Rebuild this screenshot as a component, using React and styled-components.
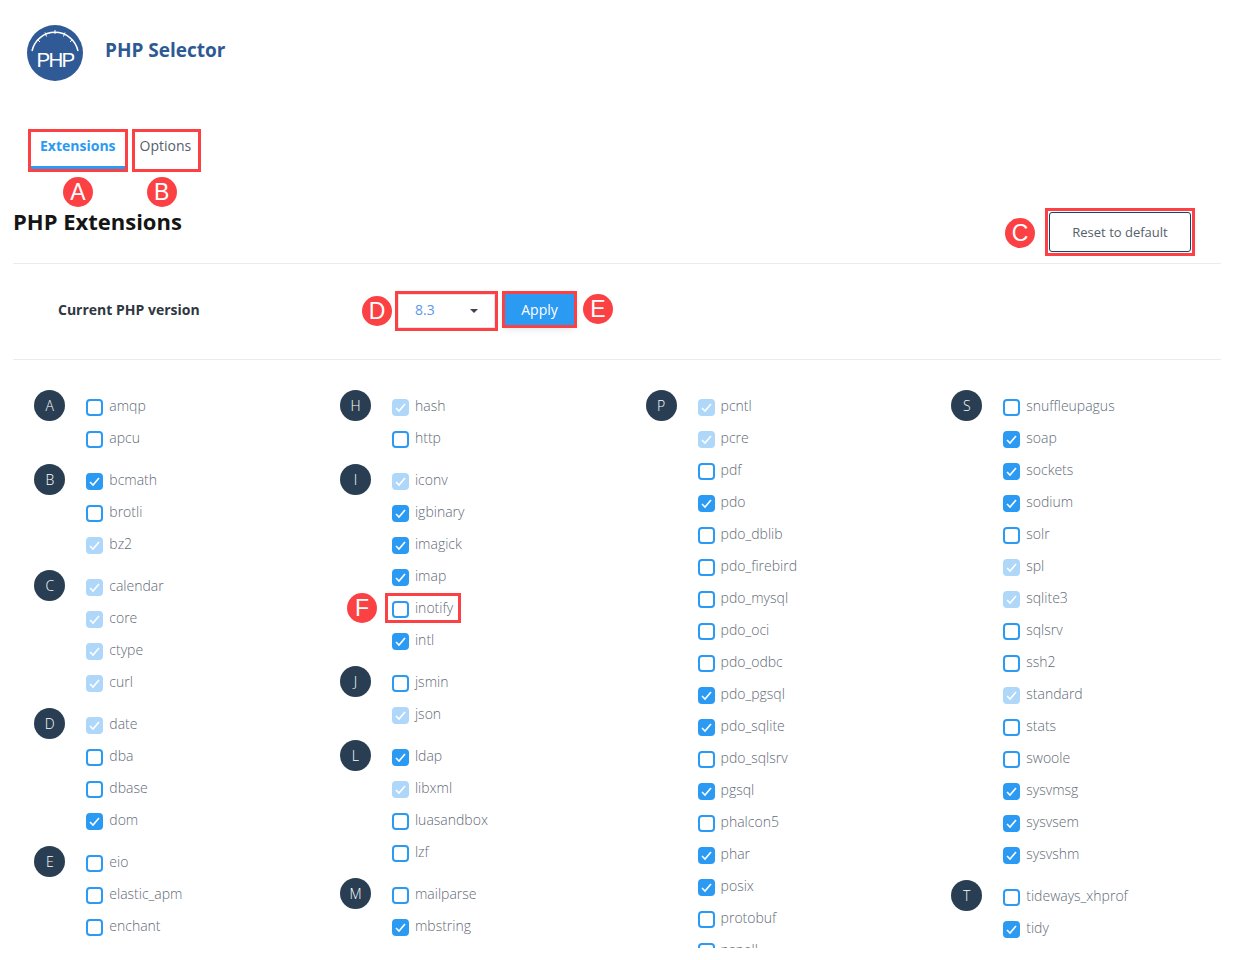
import React from "react";
import styled, { createGlobalStyle } from "styled-components";

const Global = createGlobalStyle`
  html, body { margin: 0; padding: 0; background: #fff; }
  body { font-family: "Open Sans", "Liberation Sans", sans-serif; }
  * { box-sizing: border-box; }
`;

const RED = "#fb4143";
const BLUE = "#2b9af3";

const Page = styled.div`
  width: 1235px;
  height: 960px;
  padding-left: 13px;
  overflow: hidden;
`;
const Header = styled.header`
  display: flex;
  align-items: center;
  gap: 22px;
  height: 56px;
  margin: 25px 0 0 14px;
`;
const Logo = styled.svg`
  width: 56px;
  height: 56px;
  display: block;
`;
const AppTitle = styled.h1`
  margin: 0 0 6px;
  font-size: 19px;
  line-height: 24px;
  font-weight: 700;
  color: #2e5a94;
`;
const Tabs = styled.nav`
  display: flex;
  gap: 10px;
  margin: 51px 0 0 18px;
  height: 37px;
`;
const Tab = styled.div`
  position: relative;
  padding: 4px ${(p) => p.$right}px 0 ${(p) => p.$left}px;
  font-size: 14px;
  line-height: 19px;
  font-weight: ${(p) => (p.$active ? 700 : 400)};
  color: ${(p) => (p.$active ? BLUE : "#555f6b")};
  border-bottom: 3px solid ${(p) => (p.$active ? BLUE : "transparent")};
`;
const Frame = styled.span`
  position: absolute;
  inset: ${(p) => p.$inset};
  border: 3px solid ${RED};
  pointer-events: none;
`;
const Badge = styled.span`
  position: absolute;
  left: ${(p) => p.$x}px;
  top: ${(p) => p.$y}px;
  width: 30px;
  height: 30px;
  border-radius: 50%;
  background: ${RED};
  color: #fff;
  font-family: "Liberation Sans", Arial, sans-serif;
  font-size: 23px;
  font-weight: 400;
  line-height: 30px;
  text-align: center;
`;
const TitleRow = styled.div`
  display: flex;
  justify-content: space-between;
  align-items: flex-start;
  width: 1208px;
  height: 59px;
  margin-top: 36px;
  padding: 7px 30px 0 0;
  border-bottom: 1px solid #ececec;
`;
const Heading = styled.h2`
  margin: -2px 0 0;
  font-size: 22px;
  line-height: 22px;
  font-weight: 700;
  color: #151515;
`;
const ResetButton = styled.button`
  position: relative;
  width: 142px;
  height: 40px;
  background: #fff;
  border: 1px solid #1f3f6b;
  border-radius: 3px;
  font: 400 13px "Open Sans", sans-serif;
  color: #555f6b;
  padding: 0;
`;
const VersionRow = styled.div`
  display: flex;
  align-items: flex-start;
  width: 1208px;
  height: 96px;
  padding: 30px 0 0 45px;
  border-bottom: 1px solid #ececec;
`;
const VersionLabel = styled.div`
  width: 340px;
  font-size: 14px;
  font-weight: 700;
  line-height: 32px;
  color: #2f3740;
`;
const Select = styled.div`
  position: relative;
  display: flex;
  align-items: center;
  justify-content: space-between;
  width: 97px;
  height: 34px;
  padding: 0 17px 3px 16px;
  border: 1px solid #e2e4ea;
  font-size: 14px;
  font-weight: 400;
  color: #5f97ea;
`;
const Caret = styled.span`
  width: 0;
  height: 0;
  border-left: 4px solid transparent;
  border-right: 4px solid transparent;
  border-top: 4px solid #3d4450;
  margin: 3px -1px 0 0;
`;
const ApplyButton = styled.button`
  position: relative;
  width: 69px;
  height: 31px;
  margin-left: 10px;
  background: ${BLUE};
  border: 0;
  color: #fff;
  font: 500 14px "Open Sans", sans-serif;
  padding: 0;
  box-shadow: 0 3px 8px rgba(0, 0, 0, 0.14);
`;
const Columns = styled.div`
  display: grid;
  grid-template-columns: repeat(4, 305.67px);
  align-items: start;
  height: 588px;
  padding: 30px 0 0 21.3px;
  overflow: hidden;
`;
const Column = styled.div`
  display: flex;
  flex-direction: column;
  gap: 10px;
`;
const Group = styled.section`
  display: flex;
  gap: 21px;
  align-items: flex-start;
`;
const Letter = styled.div`
  flex: none;
  width: 31px;
  height: 31px;
  border-radius: 50%;
  background: #293e52;
  color: #fff;
  font-size: 14px;
  font-weight: 300;
  line-height: 31px;
  text-align: center;
`;
const Rows = styled.div`
  display: flex;
  flex-direction: column;
`;
const Row = styled.label`
  position: relative;
  display: flex;
  align-items: center;
  gap: 6px;
  height: 32px;
  width: fit-content;
  padding-bottom: 2px;
  font-size: 14px;
  font-weight: 300;
  color: #5f6b77;
`;
const Box = styled.span`
  flex: none;
  display: flex;
  align-items: center;
  justify-content: center;
  width: 17px;
  height: 17px;
  margin-top: 5px;
  border-radius: 4px;
  border: 2px solid ${(p) => (p.$state === "d" ? "#aed7fa" : BLUE)};
  background: ${(p) => (p.$state === "c" ? BLUE : p.$state === "d" ? "#aed7fa" : "#fff")};
`;
const Check = styled.svg`
  width: 13px;
  height: 13px;
  display: block;
`;

const data = [
  [
    ["A", "amqp:u apcu:u"],
    ["B", "bcmath:c brotli:u bz2:d"],
    ["C", "calendar:d core:d ctype:d curl:d"],
    ["D", "date:d dba:u dbase:u dom:c"],
    ["E", "eio:u elastic_apm:u enchant:u"],
  ],
  [
    ["H", "hash:d http:u"],
    ["I", "iconv:d igbinary:c imagick:c imap:c inotify:u intl:c"],
    ["J", "jsmin:u json:d"],
    ["L", "ldap:c libxml:d luasandbox:u lzf:u"],
    ["M", "mailparse:u mbstring:c"],
  ],
  [
    ["P", "pcntl:d pcre:d pdf:u pdo:c pdo_dblib:u pdo_firebird:u pdo_mysql:u pdo_oci:u pdo_odbc:u pdo_pgsql:c pdo_sqlite:c pdo_sqlsrv:u pgsql:c phalcon5:u phar:c posix:c protobuf:u pspell:u"],
  ],
  [
    ["S", "snuffleupagus:u soap:c sockets:c sodium:c solr:u spl:d sqlite3:d sqlsrv:u ssh2:u standard:d stats:u swoole:u sysvmsg:c sysvsem:c sysvshm:c"],
    ["T", "tideways_xhprof:u tidy:c"],
  ],
];

const PhpLogo = () => (
  <Logo viewBox="0 0 56 56">
    <circle cx="28" cy="28" r="28" fill="#2f5a96" />
    <path d="M5 26 A23.5 23.5 0 0 1 51 26" fill="none" stroke="#fff" strokeWidth="1.5" />
    <path d="M10.5 14.5 L13 17 M18 7.5 L19.5 11.5 M28 5 L28 9 M38 7.5 L36.5 11.5 M45.5 14.5 L43 17" stroke="#fff" strokeWidth="1" />
    <text x="28" y="41.5" textAnchor="middle" fill="#fff" fontFamily="Liberation Sans, Arial, sans-serif" fontSize="20.5" letterSpacing="-1.7">PHP</text>
  </Logo>
);

const Item = ({ name, state }) => (
  <Row>
    <Box $state={state}>
      {state !== "u" && (
        <Check viewBox="0 0 13 13">
          <path d="M2 7 L5 10 L11 3" fill="none" stroke="#fff" strokeWidth="1.6" />
        </Check>
      )}
    </Box>
    {name}
    {name === "inotify" && (
      <>
        <Frame $inset="1px -8px 1px -7px" />
        <Badge $x={-45} $y={1}>F</Badge>
      </>
    )}
  </Row>
);

export default function App() {
  return (
    <Page>
      <Global />
      <Header>
        <PhpLogo />
        <AppTitle>PHP Selector</AppTitle>
      </Header>
      <Tabs>
        <Tab $active $left={9} $right={9}>
          Extensions
          <Frame $inset="-3px -3px -6px -3px" />
          <Badge $x={32} $y={45}>A</Badge>
        </Tab>
        <Tab $left={5} $right={7}>
          Options
          <Frame $inset="-3px -3px -6px -3px" />
          <Badge $x={12} $y={45}>B</Badge>
        </Tab>
      </Tabs>
      <TitleRow>
        <Heading>PHP Extensions</Heading>
        <ResetButton>
          Reset to default
          <Frame $inset="-5px" />
          <Badge $x={-45} $y={5}>C</Badge>
        </ResetButton>
      </TitleRow>
      <VersionRow>
        <VersionLabel>Current PHP version</VersionLabel>
        <Select>
          8.3
          <Caret />
          <Frame $inset="-4px" />
          <Badge $x={-37} $y={1}>D</Badge>
        </Select>
        <ApplyButton>
          Apply
          <Frame $inset="-3px" />
          <Badge $x={78} $y={0}>E</Badge>
        </ApplyButton>
      </VersionRow>
      <Columns>
        {data.map((col, i) => (
          <Column key={i}>
            {col.map(([letter, items]) => (
              <Group key={letter}>
                <Letter>{letter}</Letter>
                <Rows>
                  {items.split(" ").map((it) => {
                    const [name, state] = it.split(":");
                    return <Item key={name} name={name} state={state} />;
                  })}
                </Rows>
              </Group>
            ))}
          </Column>
        ))}
      </Columns>
    </Page>
  );
}
